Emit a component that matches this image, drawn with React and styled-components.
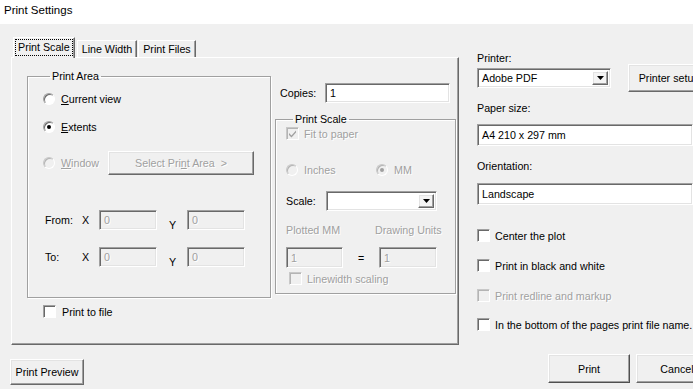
import React from 'react';
import styled, { createGlobalStyle, css } from 'styled-components';

const GlobalStyle = createGlobalStyle`
  body {
    margin: 0;
    font-family: "Liberation Sans", Arial, sans-serif;
    font-size: 10.7px;
    color: #000;
  }
`;

const sunken = css`
  border-style: solid;
  border-width: 1px;
  border-color: #a0a0a0 #fff #fff #a0a0a0;
  box-shadow: inset 1px 1px 0 #696969, inset -1px -1px 0 #e3e3e3;
`;

const raised = css`
  border-style: solid;
  border-width: 1px;
  border-color: #fff #696969 #696969 #fff;
  box-shadow: inset -1px -1px 0 #a0a0a0, inset 1px 1px 0 #e3e3e3;
`;

const disabledText = css`
  color: #a0a0a0;
  text-shadow: 1px 1px 0 #fff;
`;

const Window = styled.div`
  width: 693px;
  height: 389px;
  overflow: hidden;
  background: #f0f0f0;
`;

const TitleBar = styled.div`
  height: 24px;
  background: #fff;
  display: flex;
  align-items: center;
  padding-left: 4px;
  padding-bottom: 4px;
  box-sizing: border-box;
  font-size: 11.5px;
`;

const Body = styled.div`
  display: grid;
  grid-template-columns: 448px 240px;
  column-gap: 18px;
  padding: 13px 0 0 11px;
`;

const LeftColumn = styled.div`
  display: flex;
  flex-direction: column;
`;

const TabStrip = styled.div`
  display: flex;
  align-items: flex-end;
  height: 20px;
  padding-left: 2px;
  position: relative;
  z-index: 1;
`;

const Tab = styled.div`
  box-sizing: border-box;
  height: ${(p) => (p.$active ? '21px' : '17px')};
  margin-bottom: ${(p) => (p.$active ? '-1px' : '0')};
  padding: ${(p) => (p.$active ? '2px 2px 0' : '1px 4px 0')};
  margin-left: ${(p) => (p.$active ? '0' : '1px')};
  margin-right: ${(p) => (p.$active ? '1px' : '0')};
  background: #f0f0f0;
  border: 1px solid #fff;
  border-bottom: none;
  border-right-color: #696969;
  box-shadow: inset -1px 0 0 #a0a0a0;
  line-height: 15px;
`;

const FocusLabel = styled.span`
  display: inline-block;
  padding: 0 2px;
  outline: 1px dotted #000;
`;

const Panel = styled.div`
  box-sizing: border-box;
  height: 288px;
  border-style: solid;
  border-width: 1px;
  border-color: #fff #696969 #696969 #fff;
  box-shadow: inset -1px -1px 0 #a0a0a0;
  display: grid;
  grid-template-columns: 244px 181px;
  column-gap: 4px;
  padding: 12px 0 0 15px;
  align-items: start;
`;

const GroupBox = styled.fieldset`
  margin: ${(p) => p.$top || 0}px 0 0;
  padding: 0 0 0 ${(p) => p.$left}px;
  height: ${(p) => p.$height}px;
  box-sizing: border-box;
  border: 1px solid #a0a0a0;
  box-shadow: inset 1px 1px 0 #fff, 1px 1px 0 #fff;
  display: flex;
  flex-direction: column;
  min-width: 0;
`;

const Legend = styled.legend`
  margin-left: 7px;
  padding: 0 2px;
  line-height: 13px;
`;

const Row = styled.div`
  display: flex;
  align-items: center;
  height: ${(p) => p.$h || 13}px;
  margin-top: ${(p) => p.$mt || 0}px;
  margin-left: ${(p) => p.$ml || 0}px;
  gap: ${(p) => p.$gap || 0}px;
`;

const Text = styled.span`
  white-space: nowrap;
  width: ${(p) => (p.$w ? `${p.$w}px` : 'auto')};
  flex-shrink: 0;
  ${(p) => p.$disabled && disabledText}
  ${(p) => p.$low && 'align-self: flex-end; margin-bottom: -1px;'}
  ${(p) => p.$center && 'text-align: center;'}
`;

const RadioCircle = styled.span`
  position: relative;
  width: 12px;
  height: 12px;
  box-sizing: border-box;
  border-radius: 50%;
  border: 1px solid;
  border-color: ${(p) => (p.$disabled ? '#c8c8c8 #fff #fff #c8c8c8' : '#a0a0a0 #fff #fff #a0a0a0')};
  box-shadow: inset 1px 1px 0 ${(p) => (p.$disabled ? '#b4b4b4' : '#696969')};
  background: ${(p) => (p.$disabled ? '#f0f0f0' : '#fff')};
  flex-shrink: 0;
  margin-right: 6px;

  &::after {
    content: '';
    display: ${(p) => (p.$checked ? 'block' : 'none')};
    position: absolute;
    left: 3px;
    top: 3px;
    width: 4px;
    height: 4px;
    border-radius: 50%;
    background: ${(p) => (p.$disabled ? '#a0a0a0' : '#000')};
  }
`;

const CheckBox = styled.span`
  display: flex;
  align-items: center;
  justify-content: center;
  width: 13px;
  height: 13px;
  box-sizing: border-box;
  flex-shrink: 0;
  margin-right: ${(p) => p.$gap || 5}px;
  border-style: solid;
  border-width: 1px;
  border-color: ${(p) => (p.$disabled ? '#c8c8c8 #fff #fff #c8c8c8' : '#a0a0a0 #fff #fff #a0a0a0')};
  box-shadow: inset 1px 1px 0 ${(p) => (p.$disabled ? '#b4b4b4' : '#696969')};
  background: ${(p) => (p.$disabled ? '#f0f0f0' : '#fff')};
`;

const Field = styled.div`
  box-sizing: border-box;
  width: ${(p) => p.$w}px;
  height: ${(p) => p.$h || 20}px;
  flex-shrink: 0;
  ${sunken}
  background: ${(p) => (p.$disabled ? '#f0f0f0' : '#fff')};
  display: flex;
  align-items: center;
  padding-left: 4px;
  ${(p) => p.$disabled && disabledText}
`;

const Select = styled(Field)`
  justify-content: space-between;
  padding-right: 2px;
`;

const ArrowButton = styled.span`
  width: 16px;
  height: 14px;
  box-sizing: border-box;
  ${raised}
  background: #f4f4f4;
  display: flex;
  align-items: center;
  justify-content: center;
`;

const Button = styled.div`
  box-sizing: border-box;
  width: ${(p) => p.$w}px;
  height: ${(p) => p.$h}px;
  flex-shrink: 0;
  ${raised}
  ${(p) => p.$default && 'border-color: #fff #505050 #505050 #fff;'}
  background: #f0f0f0;
  display: flex;
  align-items: center;
  justify-content: center;
  white-space: nowrap;
  ${(p) => p.$disabled && disabledText}
`;

const RightColumn = styled.div`
  display: flex;
  flex-direction: column;
`;

const PreviewButton = styled(Button)`
  margin: 14px 0 0 -1px;
`;

function Radio({ checked, disabled, children, width }) {
  return (
    <>
      <RadioCircle $checked={checked} $disabled={disabled} />
      <Text $disabled={disabled} $w={width}>{children}</Text>
    </>
  );
}

function Check({ checked, disabled, gap }) {
  return (
    <CheckBox $disabled={disabled} $gap={gap}>
      {checked && (
        <svg width="9" height="9" viewBox="0 0 9 9">
          <path d="M1 4 L3.5 6.5 L8 1.5 L8 3.5 L3.5 8.5 L1 6 Z" fill={disabled ? '#a0a0a0' : '#000'} />
        </svg>
      )}
    </CheckBox>
  );
}

function Arrow() {
  return (
    <ArrowButton>
      <svg width="7" height="4" viewBox="0 0 7 4">
        <polygon points="0,0 7,0 3.5,4" fill="#000" />
      </svg>
    </ArrowButton>
  );
}

function CoordRow({ label, mt }) {
  return (
    <Row $h={20} $mt={mt} $ml={2}>
      <Text $w={37}>{label}</Text>
      <Text $w={17}>X</Text>
      <Field $w={58} $disabled>0</Field>
      <Text $w={12} />
      <Text $w={18} $low>Y</Text>
      <Field $w={58} $disabled>0</Field>
    </Row>
  );
}

export default function App() {
  return (
    <Window>
      <GlobalStyle />
      <TitleBar>Print Settings</TitleBar>
      <Body>
        <LeftColumn>
          <TabStrip>
            <Tab $active>
              <FocusLabel>Print Scale</FocusLabel>
            </Tab>
            <Tab>Line Width</Tab>
            <Tab>Print Files</Tab>
          </TabStrip>
          <Panel>
            <div>
              <GroupBox $height={228} $left={15}>
                <Legend>Print Area</Legend>
                <Row $h={16} $mt={8}>
                  <Radio><u>C</u>urrent view</Radio>
                </Row>
                <Row $h={16} $mt={12}>
                  <Radio checked><u>E</u>xtents</Radio>
                </Row>
                <Row $h={24} $mt={16}>
                  <Radio disabled width={47}><u>W</u>indow</Radio>
                  <Button $w={146} $h={24} $disabled>
                    Select Pri<u>n</u>t Area &nbsp;&gt;
                  </Button>
                </Row>
                <CoordRow label="From:" mt={35} />
                <CoordRow label="To:" mt={17} />
              </GroupBox>
              <Row $mt={7} $ml={16}>
                <Check gap={6} />
                <Text>Print to file</Text>
              </Row>
            </div>
            <div>
              <Row $h={20} $mt={13} $ml={5}>
                <Text $w={45}>Copies:</Text>
                <Field $w={125}>1</Field>
              </Row>
              <GroupBox $height={181} $left={10} $top={10}>
                <Legend>Print Scale</Legend>
                <Row $mt={1}>
                  <Check checked disabled />
                  <Text $disabled>Fit to paper</Text>
                </Row>
                <Row $mt={23}>
                  <Radio disabled width={72}>Inches</Radio>
                  <Radio checked disabled>MM</Radio>
                </Row>
                <Row $h={20} $mt={15}>
                  <Text $w={40}>Scale:</Text>
                  <Select $w={111}>
                    <span />
                    <Arrow />
                  </Select>
                </Row>
                <Row $mt={12}>
                  <Text $w={89} $disabled>Plotted MM</Text>
                  <Text $disabled>Drawing Units</Text>
                </Row>
                <Row $h={21} $mt={11}>
                  <Field $w={57} $h={21} $disabled>1</Field>
                  <Text $w={36} $center>=</Text>
                  <Field $w={58} $h={21} $disabled>1</Field>
                </Row>
                <Row $mt={4} $ml={3}>
                  <Check disabled />
                  <Text $disabled>Linewidth scaling</Text>
                </Row>
              </GroupBox>
            </div>
          </Panel>
          <PreviewButton $w={74} $h={26}>Print Preview</PreviewButton>
        </LeftColumn>

        <RightColumn>
          <Row $mt={14}>
            <Text>Printer:</Text>
          </Row>
          <Row $h={28} $gap={17}>
            <Select $w={134}>
              <span>Adobe PDF</span>
              <Arrow />
            </Select>
            <Button $w={82} $h={28}>Printer setup</Button>
          </Row>
          <Row $mt={9}>
            <Text>Paper size:</Text>
          </Row>
          <Row $h={22} $mt={10}>
            <Field $w={216} $h={22}>A4 210 x 297 mm</Field>
          </Row>
          <Row $mt={13}>
            <Text>Orientation:</Text>
          </Row>
          <Row $h={22} $mt={11}>
            <Field $w={216} $h={22}>Landscape</Field>
          </Row>
          <Row $mt={24}>
            <Check />
            <Text>Center the plot</Text>
          </Row>
          <Row $mt={17}>
            <Check />
            <Text>Print in black and white</Text>
          </Row>
          <Row $mt={17}>
            <Check disabled />
            <Text $disabled>Print redline and markup</Text>
          </Row>
          <Row $mt={16}>
            <Check />
            <Text>In the bottom of the pages print file name.</Text>
          </Row>
          <Row $h={29} $mt={23} $ml={71} $gap={6}>
            <Button $w={82} $h={29} $default>Print</Button>
            <Button $w={82} $h={29}>Cancel</Button>
          </Row>
        </RightColumn>
      </Body>
    </Window>
  );
}
